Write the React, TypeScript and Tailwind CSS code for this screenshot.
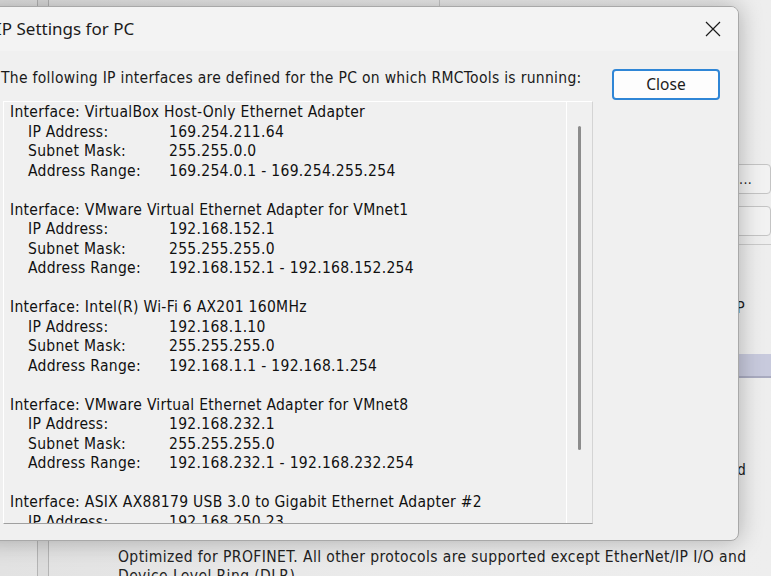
import React from "react";

const listFont = { fontFamily: '"DejaVu Sans Condensed", "DejaVu Sans", sans-serif' };
const uiFont = { fontFamily: '"Noto Sans", sans-serif' };

type Iface = { name: string; ip: string; mask: string; range: string };

const interfaces: Iface[] = [
  { name: "VirtualBox Host-Only Ethernet Adapter", ip: "169.254.211.64", mask: "255.255.0.0", range: "169.254.0.1 - 169.254.255.254" },
  { name: "VMware Virtual Ethernet Adapter for VMnet1", ip: "192.168.152.1", mask: "255.255.255.0", range: "192.168.152.1 - 192.168.152.254" },
  { name: "Intel(R) Wi-Fi 6 AX201 160MHz", ip: "192.168.1.10", mask: "255.255.255.0", range: "192.168.1.1 - 192.168.1.254" },
  { name: "VMware Virtual Ethernet Adapter for VMnet8", ip: "192.168.232.1", mask: "255.255.255.0", range: "192.168.232.1 - 192.168.232.254" },
  { name: "ASIX AX88179 USB 3.0 to Gigabit Ethernet Adapter #2", ip: "192.168.250.23", mask: "255.255.255.0", range: "192.168.250.1 - 192.168.250.254" },
];

function Row({ label, value }: { label: string; value: string }) {
  return (
    <div className="flex h-[19.5px] items-center pl-[18px]">
      <span className="w-[141px]">{label}</span>
      <span>{value}</span>
    </div>
  );
}

function InterfaceBlock({ item }: { item: Iface }) {
  return (
    <div className="pb-[19.5px]">
      <div className="flex h-[19.5px] items-center">Interface: {item.name}</div>
      <Row label="IP Address:" value={item.ip} />
      <Row label="Subnet Mask:" value={item.mask} />
      <Row label="Address Range:" value={item.range} />
    </div>
  );
}

// the main RMCTools window, mostly hidden behind the dialog
function BackWindow() {
  return (
    <div className="flex h-full w-full bg-gradient-to-r from-[#e2e2e2] via-[#ebebeb] to-[#eeeeee]">
      <div className="w-[37px]" />
      <div className="h-full w-[12px] border-x border-[#b4b4b4] bg-[#dcdcdc]" />
      <div className="flex flex-1 flex-col">
        <div className="h-[6px] shrink-0 pl-[390px]">
          <div className="h-full w-px bg-[#c8c8c8]" />
        </div>
        <div className="flex flex-1 flex-col items-end pt-[158px] text-[15px] tracking-[0.3px] text-[#222]" style={listFont}>
          <div className="flex h-[30px] w-[69px] items-center justify-end rounded-[4px] border border-[#c4c4c4] bg-[#f2f2f2] pr-[18px] text-[14px]">...</div>
          <div className="mt-[12px] h-[30px] w-[69px] rounded-[4px] border border-[#c4c4c4] bg-[#f2f2f2]" />
          <div className="mt-[8px] h-px w-[71px] bg-[#cacaca]" />
          <div className="mt-[52px] pr-[26px]">IP</div>
          <div className="mt-[34px] h-[24px] w-[71px] border-b-2 border-[#a9abc0] bg-[#c8cadd]" />
          <div className="mt-[81px] pr-[25px]">and</div>
        </div>
        <div className="h-[28px] shrink-0 pl-[69px] text-[15.5px] leading-[19px] tracking-[0.4px] text-[#222]" style={listFont}>
          <div>Optimized for PROFINET. All other protocols are supported except EtherNet/IP I/O and</div>
          <div>Device Level Ring (DLR)</div>
        </div>
      </div>
    </div>
  );
}

export default function App() {
  return (
    <div className="relative h-[576px] w-[771px] overflow-hidden bg-[#e6e6e6] text-[#1a1a1a]">
      <BackWindow />

      {/* dialog */}
      <div className="absolute left-[-20px] top-[6px] flex h-[535px] w-[759px] flex-col overflow-hidden rounded-r-[8px] border border-[#a8a8a8] bg-[#f0f0f0] shadow-[0_0_24px_rgba(0,0,0,0.28)]">
        <div className="flex h-[44px] shrink-0 items-center justify-between bg-[#f3f3f3] pl-[15px] pr-[16px]">
          <span className="text-[17px] text-[#1b1b1b]" style={uiFont}>IP Settings for PC</span>
          <svg width="16" height="16" viewBox="0 0 16 16" className="mr-[1px]">
            <path d="M1 1 L15 15 M15 1 L1 15" stroke="#1b1b1b" strokeWidth="1.2" fill="none" />
          </svg>
        </div>
        <div className="flex flex-1 gap-[19px] pl-[20px] pt-[18px]">
          <div className="flex flex-col tracking-[0.3px]" style={listFont}>
            <div className="h-[32px] text-[15.5px] leading-[18px]">The following IP interfaces are defined for the PC on which RMCTools is running:</div>
            <div className="ml-[2px] flex h-[423px] w-[590px] border border-b-[#a0a0a0] border-l-white border-r-[#d4d4d4] border-t-white bg-[#f0f0f0]">
              <div className="h-full flex-1 overflow-hidden pl-[6px] pt-[1px] text-[15.5px] text-[#111]">
                {interfaces.map((it) => (
                  <InterfaceBlock key={it.name} item={it} />
                ))}
              </div>
              <div className="relative h-full w-[26px] border-l border-white bg-[#f0f0f0]">
                <div className="absolute left-[11px] top-[24px] h-[324px] w-[3px] rounded-full bg-[#8c8c8c]" />
              </div>
            </div>
          </div>
          <button className="h-[31px] w-[108px] rounded-[4px] border-2 border-[#2f86d6] bg-[#fdfdfd] text-[15.5px] text-[#1b1b1b]" style={uiFont}>
            Close
          </button>
        </div>
      </div>
    </div>
  );
}
